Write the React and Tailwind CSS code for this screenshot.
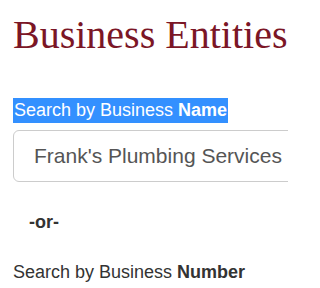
import React from 'react';

const App = () => {
    return (
        <div className="w-[288px] h-[288px] overflow-hidden bg-white pl-[13px] font-['Liberation_Sans',Arial,sans-serif] text-[#333]">
            {/* Page title */}
            <h1 className="pt-[13px] whitespace-nowrap font-['Liberation_Serif','Times_New_Roman',serif] text-[40px] leading-[44px] text-[#7b1626]">
                Business Entities
            </h1>

            {/* Name search */}
            <div className="mt-[41px]">
                <span className="inline-block whitespace-nowrap bg-[#3390ff] px-px text-[18px] leading-[25px] text-white">
                    Search by Business <b>Name</b>
                </span>
            </div>
            <div className="mt-[7px] flex h-[52px] w-[300px] items-center rounded-[6px] border border-[#cccccc] pl-[20px]">
                <span className="whitespace-nowrap text-[21px] text-[#555]">Frank's Plumbing Services</span>
            </div>

            <p className="mt-[28px] pl-[16px] text-[18px] font-bold leading-[25px]">-or-</p>

            {/* Number search */}
            <p className="mt-[25px] whitespace-nowrap text-[18px] leading-[25px]">
                Search by Business <b>Number</b>
            </p>
        </div>
    );
};

export default App;
